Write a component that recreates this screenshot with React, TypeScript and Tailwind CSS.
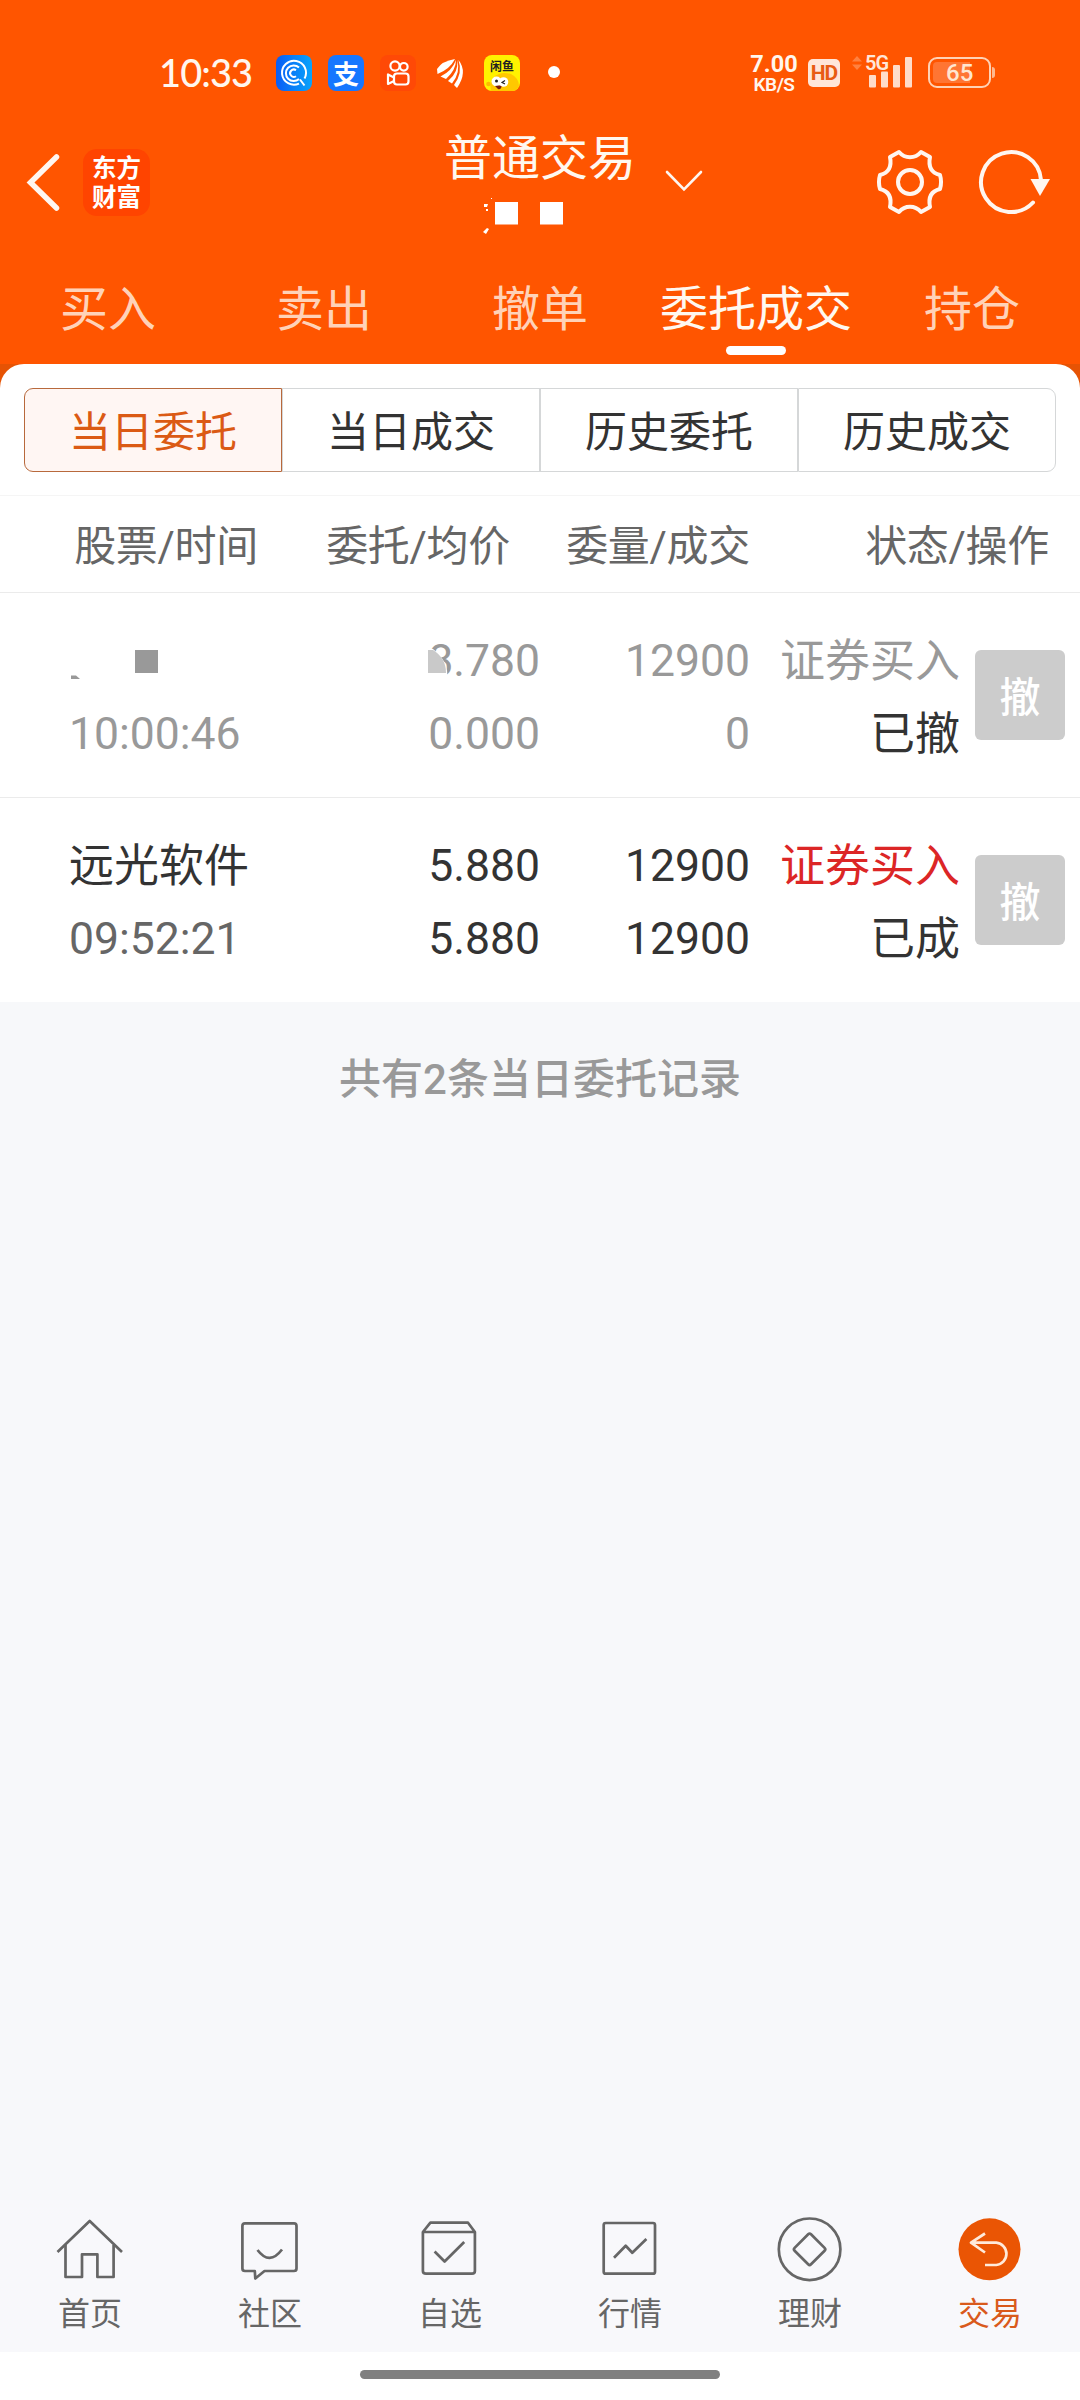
import React from 'react';

const GRAY = '#666666';

function StatusBar() {
  return (
    <div className="flex h-[144px] items-start text-[#fff6ee]">
      <div className="ml-[159px] mt-[50px] w-[117px] whitespace-nowrap font-['Lato'] text-[38px] font-medium leading-[44px] tracking-[-0.9px]">
        10:33
      </div>
      <div className="mt-[55px] flex h-[36px] items-center gap-4">
        <svg width="36" height="36" viewBox="0 0 36 36">
          <defs>
            <linearGradient id="cBlue" x1="0" x2="1" y1="0" y2="0">
              <stop offset="0" stopColor="#0a5cf5" />
              <stop offset="1" stopColor="#08a4fb" />
            </linearGradient>
          </defs>
          <rect width="36" height="36" rx="8" fill="url(#cBlue)" />
          <g fill="none" stroke="#fff" strokeWidth="2">
            <path d="M23 28.600A12 12 0 1 1 28.500 23.500M24 24.500L28.500 30.500" />
            <path d="M23 24A7.800 7.800 0 1 1 23 12.500" />
            <path d="M20 21.200A3.700 3.700 0 1 1 20 15.200" />
          </g>
        </svg>
        <div className="flex h-9 w-9 items-center justify-center rounded-lg bg-[#1677ff] font-['Noto_Sans_CJK_SC',sans-serif] text-[26px] font-bold leading-[36px] text-white">
          支
        </div>
        <svg width="36" height="36" viewBox="0 0 36 36">
          <rect width="36" height="36" rx="8" fill="#ff4906" />
          <g fill="none" stroke="#fff" strokeWidth="2.200" strokeLinejoin="round">
            <circle cx="15" cy="11" r="4.600" />
            <circle cx="23.800" cy="11.800" r="3.800" />
            <rect x="14" y="18.500" width="14.500" height="11" rx="3" />
            <path d="M14 22.500L8 19.500V29L14 26" />
          </g>
        </svg>
        <svg width="36" height="36" viewBox="0 0 36 36">
          <path d="M23 4Q10 6 5 14L5.500 19Q18 14 23 4Z" fill="#fff" />
          <path d="M24 5Q20 16 8.500 21.500L14 24Q24 15 24 5Z" fill="#fff" />
          <path d="M25 5Q27 17 16 26L20 28.500Q29 17 25 5Z" fill="#fff" />
          <path d="M26.500 5Q31 18 22 30L25 33Q36 17 26.500 5Z" fill="#fff" />
        </svg>
        <div className="relative h-9 w-9 rounded-lg bg-[#fff200]">
          <svg className="absolute inset-0 rounded-lg" width="36" height="36" viewBox="0 0 36 36">
            <path d="M7 36Q5 27 10 22Q17 16 27 19Q35 23 35 31L32 36Z" fill="#ffc800" />
            <circle cx="4.500" cy="29" r="2.300" fill="#ffb800" />
            <circle cx="12.500" cy="26.500" r="5" fill="#fff" />
            <circle cx="19.500" cy="27" r="4.800" fill="#fff" />
            <circle cx="12.500" cy="26" r="1.500" fill="#222" />
            <path d="M21 25.500l-3 2l3 1.500" stroke="#222" strokeWidth="1.200" fill="none" />
            <path d="M11 31Q15 30 17.500 31Q17 35 14 34Z" fill="#7a1a10" />
          </svg>
          <span className="absolute left-[6px] top-[2px] whitespace-nowrap font-['Noto_Sans_CJK_SC',sans-serif] text-[12px] font-bold leading-[18px] text-[#222]">闲鱼</span>
        </div>
      </div>
      <div className="ml-[28px] mt-[66px] h-3 w-3 rounded-full bg-white" />
      <div className="ml-[188px] mt-[53px] flex w-[52px] flex-col items-center whitespace-nowrap font-['Roboto'] font-bold">
        <span className="text-[23.500px] leading-[23px]">7.00</span>
        <span className="text-[19px] font-semibold leading-[18px] tracking-[-0.5px]">KB/S</span>
      </div>
      <div className="ml-[8px] mt-[59px] flex h-7 w-8 items-center justify-center rounded-[5px] bg-[#ffe6d9] font-['Roboto'] text-[21px] font-bold leading-none tracking-[-1px] text-[#e85c14]">
        HD
      </div>
      <div className="relative ml-[12px] mt-[55px] h-[33px] w-[62px]">
        <svg width="62" height="33" viewBox="0 0 62 33">
          <path d="M0 6.500L5 1L10 6.500ZM0 9.500H10L5 15Z" fill="#ff8140" />
          <g fill="#ffdcc9">
            <rect x="17" y="20" width="7" height="12.500" rx="1" />
            <rect x="29" y="16.500" width="7" height="16" rx="1" />
            <rect x="41" y="10" width="7" height="22.500" rx="1" />
            <rect x="53" y="2" width="7" height="30.500" rx="1" />
          </g>
        </svg>
        <span className="absolute left-[13px] top-[-2px] font-['Roboto'] text-[20px] font-semibold leading-5 tracking-[-1px] text-[#ffe6d9]">5G</span>
      </div>
      <div className="ml-[14px] mt-[57px] flex items-center">
        <div className="flex h-[31px] w-[63px] items-center rounded-[9px] border-2 border-[#ffd2b5] p-[3px]">
          <div className="h-full w-[37px] rounded-l-[4px] bg-[#ff7533]" />
          <span className="-ml-[24px] font-['Roboto'] text-[24px] font-medium leading-none text-[#ffe6d0]">65</span>
        </div>
        <div className="ml-px h-[11px] w-[3px] rounded-r-sm bg-[#ffb88f]" />
      </div>
    </div>
  );
}

function TitleBar() {
  return (
    <div className="relative flex h-[100px] items-start">
      <svg className="ml-[24px] mt-[8px]" width="38" height="62" viewBox="0 0 38 62">
        <path d="M32.500 5L6.500 30.500L32.500 56" fill="none" stroke="#fff6f0" strokeWidth="5.500" strokeLinecap="round" />
      </svg>
      <div className="ml-[21px] mt-[5px] flex h-[67px] w-[67px] flex-col items-center justify-center rounded-[14px] bg-[#ff4400] text-[24.500px] font-bold leading-[29px] text-white">
        <span>东方</span>
        <span>财富</span>
      </div>
      <div className="ml-[294px] flex w-[192px] flex-col text-[48px] leading-[56px] text-[#fff8f0]">
        <span className="-mt-[13px] whitespace-nowrap">普通交易</span>
        <svg className="ml-[39px] mt-[11px]" width="82" height="40" viewBox="0 0 82 40">
          <g fill="#fff">
            <rect x="12" y="4" width="23" height="22.500" />
            <rect x="57" y="4" width="23" height="22.500" />
            <path d="M1 6h4l-1 3h-3zM8 0h1v1h-1zM3 11h2v2h-2zM0 34l4-4l2 1l-3 5z" />
          </g>
        </svg>
      </div>
      <svg className="ml-[27px] mt-[24px]" width="40" height="26" viewBox="0 0 40 26">
        <path d="M4 4L21 21.500L38 4" fill="none" stroke="#fff6f0" strokeWidth="2.600" strokeLinecap="round" />
      </svg>
      <svg className="ml-[171px] mt-[2px]" width="72" height="72" viewBox="-36 -36 72 72">
        <g fill="none" stroke="#fff6f0" strokeWidth="4" strokeLinejoin="round">
          <circle r="12" />
          <path d="M-11 -30C-5 -23 5 -23 11 -30L20 -25C18 -15 22 -9 30 -7C31.500 -2 31.500 2 30 7C22 9 18 15 20 25L11 30C5 23 -5 23 -11 30L-20 25C-18 15 -22 9 -30 7C-31.500 2 -31.500 -2 -30 -7C-22 -9 -18 -15 -20 -25Z" />
        </g>
      </svg>
      <svg className="ml-[29px] mt-[2px]" width="76" height="72" viewBox="-36 -36 76 72">
        <path d="M30 -2A30 30 0 1 0 22 20.500" fill="none" stroke="#fff6f0" strokeWidth="4" strokeLinecap="round" />
        <path d="M19.500 -3H39L29 14Z" fill="#fff6f0" />
      </svg>
    </div>
  );
}

const TABS = ['买入', '卖出', '撤单', '委托成交', '持仓'];

function Tabs() {
  return (
    <div className="grid h-[120px] grid-cols-5 pt-[38px]">
      {TABS.map((t, i) => (
        <div key={t} className="flex flex-col items-center">
          <span className={i === 3 ? 'text-[48px] leading-[56px] text-[#fff8f0]' : 'text-[48px] leading-[56px] text-[#ffd2b8]'}>{t}</span>
          {i === 3 && <span className="mt-[8px] h-[9px] w-[60px] rounded-full bg-white" />}
        </div>
      ))}
    </div>
  );
}

const SEGMENTS = ['当日委托', '当日成交', '历史委托', '历史成交'];

function Segments() {
  return (
    <div className="grid h-[132px] grid-cols-4 border-b border-[#f5f5f5] px-6 pb-[23px] pt-6 text-[42px]">
      {SEGMENTS.map((s, i) => (
        <div
          key={s}
          className={
            i === 0
              ? 'flex items-center justify-center rounded-l-[9px] border border-[#b8693c] bg-[#fff6f3] pt-[5px] leading-none text-[#db5a14]'
              : i === 3
                ? 'flex items-center justify-center rounded-r-[9px] border border-[#d5d7d8] pt-[5px] leading-none text-[#333]'
                : 'flex items-center justify-center border border-[#d5d7d8] pt-[5px] leading-none text-[#333]'
          }
        >
          {s}
        </div>
      ))}
    </div>
  );
}

function TableHead() {
  return (
    <div className="flex h-[97px] border-b border-[#ebebeb] pt-[7px] text-[42px] leading-[88px] tracking-[-0.3px] text-[#666]">
      <span className="w-[258px] text-right">股票/时间</span>
      <span className="w-[252px] text-right">委托/均价</span>
      <span className="w-[240px] text-right">委量/成交</span>
      <span className="w-[299px] text-right">状态/操作</span>
    </div>
  );
}

type Order = {
  name: React.ReactNode;
  time: string;
  price: React.ReactNode;
  avg: string;
  qty: string;
  done: string;
  side: string;
  state: string;
  tone: string;
  timeTone: string;
  sideTone: string;
};

const ORDERS: Order[] = [
  {
    name: (
      <svg className="block h-[73px]" width="120" height="73" viewBox="0 0 120 73">
        <path d="M2 50.500H7L11 54H2Z" fill="#999" />
        <rect x="66" y="25" width="23" height="23" fill="#999" />
      </svg>
    ),
    time: '10:00:46',
    price: (
      <span className="relative">
        8.780
        <svg className="absolute left-[-3px] top-0" width="40" height="53" viewBox="0 0 40 53">
          <path d="M3 14H8Q24 27 22 42H3Z" fill="#fff" />
          <path d="M3 15H8Q21 23 21 38H3Z" fill="#c9c9c9" />
        </svg>
      </span>
    ),
    avg: '0.000',
    qty: '12900',
    done: '0',
    side: '证券买入',
    state: '已撤',
    tone: 'text-[#999]',
    timeTone: 'text-[#999]',
    sideTone: 'text-[#999]',
  },
  {
    name: '远光软件',
    time: '09:52:21',
    price: '5.880',
    avg: '5.880',
    qty: '12900',
    done: '12900',
    side: '证券买入',
    state: '已成',
    tone: 'text-[#333]',
    timeTone: 'text-[#666]',
    sideTone: 'text-[#dc2626]',
  },
];

function OrderRow({ o, last }: { o: Order; last: boolean }) {
  return (
    <div className={last ? 'flex h-[204px] pt-[32px] text-[44.500px] leading-[73px]' : 'flex h-[205px] border-b border-[#ebebeb] pt-[32px] text-[44.500px] leading-[73px]'}>
      <div className={`ml-[69px] w-[231px] ${o.tone}`}>
        <div className="h-[73px] text-[45px]">{o.name}</div>
        <div className={o.timeTone}>{o.time}</div>
      </div>
      <div className={`w-[240px] text-right ${o.tone}`}>
        <div>{o.price}</div>
        <div>{o.avg}</div>
      </div>
      <div className={`w-[210px] text-right ${o.tone}`}>
        <div>{o.qty}</div>
        <div>{o.done}</div>
      </div>
      <div className="w-[210px] text-right text-[45px] text-[#333]">
        <div className={o.sideTone}>{o.side}</div>
        <div>{o.state}</div>
      </div>
      <button className="ml-[15px] mt-[25px] flex h-[90px] w-[90px] items-center justify-center rounded-md bg-[#ccc] pt-[6px] text-[41px] font-medium leading-none text-white">
        撤
      </button>
    </div>
  );
}

const NAV = [
  {
    label: '首页',
    icon: (
      <g>
        <path d="M3.500 39L35.700 8L68 39" />
        <path d="M11.500 32V64H28V41.300H43.400V64H59.600V32" />
      </g>
    ),
  },
  {
    label: '社区',
    icon: (
      <g>
        <path d="M11 10.300H60Q62.500 10.300 62.500 13V55.500Q62.500 58 60 58H30.500L21.300 65.500L20.800 58H11Q8.400 58 8.400 55.500V13Q8.400 10.300 11 10.300Z" />
        <path d="M23.500 37Q35.500 53 48 36.500" />
      </g>
    ),
  },
  {
    label: '自选',
    icon: (
      <g>
        <path d="M8.900 19L16.400 9.700H54L60.900 19V58Q60.900 60.700 58 60.700H12Q8.900 60.700 8.900 58ZM8.900 19H60.900" />
        <path d="M20.600 38.500L30.600 48.500L50.200 29" />
      </g>
    ),
  },
  {
    label: '行情',
    icon: (
      <g>
        <rect x="9.700" y="10" width="51.300" height="50.700" rx="2" />
        <path d="M20 44.700L31.700 32.700L38.300 39.700L52.400 26" />
      </g>
    ),
  },
  {
    label: '理财',
    icon: (
      <g>
        <circle cx="35.600" cy="36.300" r="30.800" />
        <rect x="24" y="24.700" width="23.200" height="23.200" rx="2" transform="rotate(45 35.600 36.300)" />
      </g>
    ),
  },
  {
    label: '交易',
    icon: (
      <g stroke="#ffeada">
        <circle cx="35.500" cy="36.300" r="31" fill="#ea5504" stroke="none" />
        <path d="M31 20.500L17 29.700L31 39.500M17 29.700H42.300A11.200 11.200 0 0 1 42.300 52H31" />
      </g>
    ),
  },
];

function BottomNav() {
  return (
    <div className="grid h-[152px] grid-cols-6 bg-[#f8f8fb] pt-[13px] text-[32px] leading-[40px]">
      {NAV.map((n, i) => (
        <div key={n.label} className="flex flex-col items-center">
          <svg width="72" height="72" viewBox="0 0 72 72" fill="none" stroke={GRAY} strokeWidth="2.700" strokeLinejoin="round">
            {n.icon}
          </svg>
          <span className={i === 5 ? 'mt-[9px] text-[#d95a1c]' : 'mt-[9px] text-[#666]'}>{n.label}</span>
        </div>
      ))}
    </div>
  );
}

export default function App() {
  return (
    <div className="flex h-[2400px] w-[1080px] flex-col overflow-hidden bg-[#f7f8fa] font-['Roboto','Noto_Sans_CJK_SC',sans-serif]">
      <header className="h-[364px] bg-[#ff5500]">
        <StatusBar />
        <TitleBar />
        <Tabs />
      </header>
      <div className="bg-[#e65304]">
        <section className="rounded-t-[24px] bg-white">
          <Segments />
          <TableHead />
          {ORDERS.map((o, i) => (
            <OrderRow key={o.time} o={o} last={i === ORDERS.length - 1} />
          ))}
        </section>
      </div>
      <main className="flex-1 pt-[48px] text-center text-[42px] font-medium leading-[60px] text-[#999]">共有2条当日委托记录</main>
      <BottomNav />
      <div className="flex h-[48px] justify-center bg-white pt-[18px]">
        <div className="h-[9px] w-[360px] rounded-full bg-[#808080]" />
      </div>
    </div>
  );
}
